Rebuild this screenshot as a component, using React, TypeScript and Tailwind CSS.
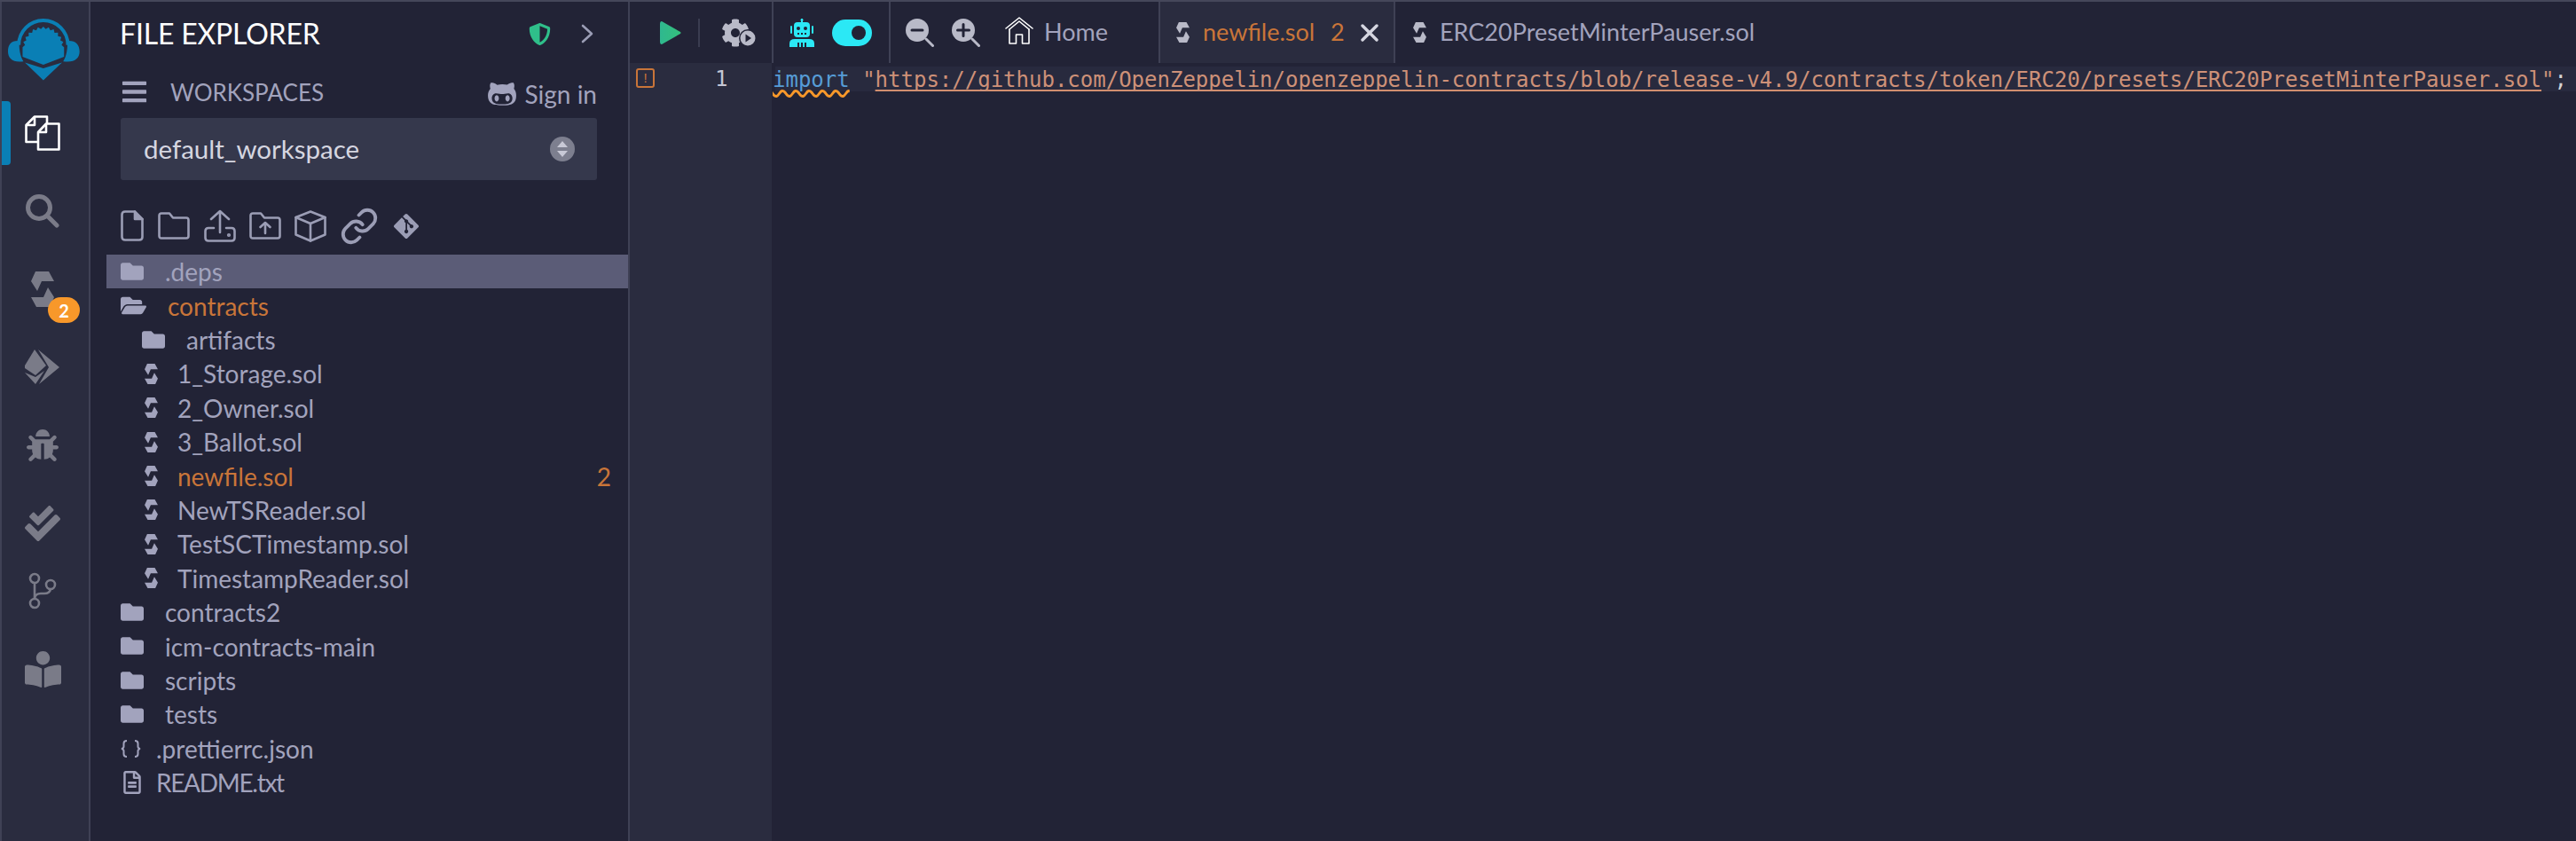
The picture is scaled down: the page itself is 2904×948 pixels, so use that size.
import React from "react";
import { Link as LinkIcon } from "lucide-react";
import { FaBars, FaBookReader, FaBug, FaCheckDouble, FaCog, FaFolder, FaFolderOpen, FaGitAlt, FaGithubAlt, FaRegFileAlt, FaShieldAlt } from "react-icons/fa";

const sunPoints = (() => {
  const pts: string[] = ["77,192"];
  for (let i = 0; i <= 24; i++) {
    const a = Math.PI * (1.0 + i / 24);
    const r = i % 2 === 0 ? 71 : 63;
    pts.push(`${(148 + r * Math.cos(a)).toFixed(1)},${(160 + r * Math.sin(a)).toFixed(1)}`);
  }
  pts.push("219,192", "148,220");
  return pts.join(" ");
})();

function Logo() {
  return (
    <svg width="81" height="70" viewBox="27 62 246 212">
      <path d="M64 152 A84 84 0 0 1 232 152" fill="none" stroke="#0a7fb5" strokeWidth="12" />
      <path d="M66 138 C38 136 27 150 27 175 C27 198 45 214 80 208 C68 192 64 160 66 138 Z" fill="#0a7fb5" />
      <path d="M230 138 C258 136 272 150 272 175 C272 198 254 214 216 208 C228 192 232 160 230 138 Z" fill="#0a7fb5" />
      <polygon points={sunPoints} fill="#0a7fb5" />
      <polygon points="85,212 148,232 212,212 148,273" fill="#0a7fb5" />
    </svg>
  );
}

function Sol({ w = 15, h = 23, color = "#a2a3bd" }: { w?: number; h?: number; color?: string }) {
  return (
    <svg width={w} height={h} viewBox="0 0 26 40" className="shrink-0">
      <polygon points="5,0 20,0 26,11 12,11 7,22 0,11" fill={color} />
      <polygon points="21,40 6,40 0,29 14,29 19,18 26,29" fill={color} />
    </svg>
  );
}

function FilesIcon() {
  return (
    <svg width="40" height="40" viewBox="0 0 40 40" fill="none" stroke="#ffffff" strokeWidth="2.6" strokeLinejoin="round">
      <path d="M15 30 H1.5 V11 L11 1.5 H25 V9" />
      <path d="M11 1.5 V11 H1.5" />
      <path d="M15 19 L24 9.5 H38.5 V38.5 H15 Z" />
      <path d="M24 9.5 V19 H15" />
    </svg>
  );
}

function SearchIcon() {
  return (
    <svg width="38" height="38" viewBox="0 0 38 38" fill="none" stroke="#7a7b88" strokeWidth="5" strokeLinecap="round">
      <circle cx="15" cy="15" r="12.5" />
      <path d="M24.5 24.5 L35 35" />
    </svg>
  );
}

function EthIcon() {
  return (
    <svg width="40" height="40" viewBox="0 0 40 40" fill="#7a7b88">
      <polygon points="0,18 11,0 24,18 12,29 0,21" />
      <polygon points="0,26 12,39 22,24 12,31" />
      <polygon points="15,0 39,20 16,39 27,20" />
    </svg>
  );
}

function GitIcon() {
  return (
    <svg width="32" height="42" viewBox="0 0 32 42" fill="none" stroke="#7a7b88" strokeWidth="2.6">
      <circle cx="7" cy="7" r="5" />
      <circle cx="25" cy="14" r="5" />
      <circle cx="7" cy="35" r="5" />
      <path d="M7 12 V30" />
      <path d="M25 19 Q24 24 18 24 H14 Q8 24 7 29" />
    </svg>
  );
}

function Nav({ children, extra = "" }: { children: React.ReactNode; extra?: string }) {
  return <div className={`relative h-[88px] flex items-center justify-center ${extra}`}>{children}</div>;
}

function IconPanel() {
  return (
    <div className="relative w-[102px] shrink-0 bg-[#2a2c3f] border-l-2 border-r-2 border-[#3f4155] flex flex-col pr-[6px]">
      <div className="h-[104px] pt-[19px] pl-[7px]">
        <Logo />
      </div>
      <Nav>
        <div className="absolute left-0 top-[8px] h-[72px] w-[10px] rounded-r-[4px] bg-[#0a7fb5]" />
        <FilesIcon />
      </Nav>
      <Nav>
        <SearchIcon />
      </Nav>
      <Nav>
        <Sol w={26} h={40} color="#7a7b88" />
        <span className="absolute left-[52px] top-[53px] h-[29px] w-[36px] rounded-full bg-[#f8982a] text-white text-[20px] font-bold flex items-center justify-center">2</span>
      </Nav>
      <Nav>
        <EthIcon />
      </Nav>
      <Nav>
        <FaBug size={36} color="#7a7b88" />
      </Nav>
      <Nav>
        <FaCheckDouble size={40} color="#7a7b88" />
      </Nav>
      <Nav extra="-mt-[12px]">
        <GitIcon />
      </Nav>
      <Nav>
        <FaBookReader size={41} color="#7a7b88" />
      </Nav>
    </div>
  );
}

function ToolIcons() {
  const s = { fill: "none", stroke: "#9b9db5", strokeWidth: 2.6, strokeLinejoin: "round" as const, strokeLinecap: "round" as const };
  return (
    <div className="h-[37px] mt-[33px] ml-[34px] flex items-center">
      <svg width="26" height="35" viewBox="0 0 26 35" {...s}>
        <path d="M5 1.5 H16 L24.5 10 V30 Q24.5 33.5 21 33.5 H5 Q1.5 33.5 1.5 30 V5 Q1.5 1.5 5 1.5 Z" />
        <path d="M16 1.5 V10 H24.5" fill="#9b9db5" />
      </svg>
      <svg className="ml-[16px]" width="36" height="31" viewBox="0 0 36 31" {...s}>
        <path d="M4 1.5 H13 L17 6.5 H32 Q34.5 6.5 34.5 9 V27 Q34.5 29.5 32 29.5 H4 Q1.5 29.5 1.5 27 V4 Q1.5 1.5 4 1.5 Z" />
      </svg>
      <svg className="ml-[16px]" width="36" height="37" viewBox="0 0 36 37" {...s}>
        <path d="M18 26 V2 M8 11 L18 2 L28 11" />
        <path d="M11 21 H5 Q1.5 21 1.5 24.5 V32 Q1.5 35.5 5 35.5 H31 Q34.5 35.5 34.5 32 V24.5 Q34.5 21 31 21 H25" />
        <circle cx="28" cy="29" r="0.8" fill="#9b9db5" />
      </svg>
      <svg className="ml-[15px]" width="36" height="31" viewBox="0 0 36 31" {...s}>
        <path d="M4 1.5 H13 L17 6.5 H32 Q34.5 6.5 34.5 9 V27 Q34.5 29.5 32 29.5 H4 Q1.5 29.5 1.5 27 V4 Q1.5 1.5 4 1.5 Z" />
        <path d="M18 24 V12 M12.5 17 L18 12 L23.5 17" />
      </svg>
      <svg className="ml-[15px]" width="36" height="36" viewBox="0 0 36 36" {...s}>
        <path d="M18 1.5 L34.5 8 V27.5 L18 34.5 L1.5 27.5 V8 Z" />
        <path d="M1.5 8 L18 15 L34.5 8 M18 15 V34.5" />
      </svg>
      <LinkIcon className="ml-[15px]" size={44} color="#9b9db5" strokeWidth={2.1} />
      <FaGitAlt className="ml-[15px]" size={32} color="#9b9db5" />
    </div>
  );
}

type Row = { n: string; k: "folder" | "open" | "sub" | "sol" | "json" | "txt"; hi?: boolean; orange?: boolean; count?: string; tight?: boolean };
const rows: Row[] = [
  { n: ".deps", k: "folder", hi: true },
  { n: "contracts", k: "open", orange: true },
  { n: "artifacts", k: "sub" },
  { n: "1_Storage.sol", k: "sol" },
  { n: "2_Owner.sol", k: "sol" },
  { n: "3_Ballot.sol", k: "sol" },
  { n: "newfile.sol", k: "sol", orange: true, count: "2" },
  { n: "NewTSReader.sol", k: "sol" },
  { n: "TestSCTimestamp.sol", k: "sol" },
  { n: "TimestampReader.sol", k: "sol" },
  { n: "contracts2", k: "folder" },
  { n: "icm-contracts-main", k: "folder" },
  { n: "scripts", k: "folder" },
  { n: "tests", k: "folder" },
  { n: ".prettierrc.json", k: "json" },
  { n: "README.txt", k: "txt", tight: true },
];

function RowIcon({ k }: { k: Row["k"] }) {
  if (k === "folder") return <div className="pl-[16px] w-[66px] shrink-0"><FaFolder size={26} color="#a2a3bd" /></div>;
  if (k === "open") return <div className="pl-[16px] w-[69px] shrink-0"><FaFolderOpen size={29} color="#a2a3bd" /></div>;
  if (k === "sub") return <div className="pl-[40px] w-[90px] shrink-0"><FaFolder size={26} color="#a2a3bd" /></div>;
  if (k === "sol") return <div className="pl-[43px] w-[80px] shrink-0"><Sol /></div>;
  if (k === "json")
    return (
      <div className="pl-[16px] w-[56px] shrink-0">
        <svg width="23" height="20" viewBox="0 0 23 20" fill="none" stroke="#a2a3bd" strokeWidth="2">
          <path d="M7 1 Q3.5 1 3.5 4 V7.5 Q3.5 9.5 1 10 Q3.5 10.5 3.5 12.5 V16 Q3.5 19 7 19" />
          <path d="M16 1 Q19.5 1 19.5 4 V7.5 Q19.5 9.5 22 10 Q19.5 10.5 19.5 12.5 V16 Q19.5 19 16 19" />
        </svg>
      </div>
    );
  return <div className="pl-[16px] w-[56px] shrink-0"><FaRegFileAlt size={26} color="#a2a3bd" /></div>;
}

function SidePanel() {
  return (
    <div className="w-[608px] shrink-0 bg-[#222336] border-r-2 border-[#3f4155] flex flex-col text-[#a2a3bd]">
      <div className="h-[72px] pl-[33px] pr-[39px] flex items-center justify-between">
        <span className="text-white text-[32px] tracking-[-0.2px]">FILE EXPLORER</span>
        <div className="flex items-center">
          <FaShieldAlt size={25} color="#2fbf8a" />
          <svg className="ml-[34px]" width="14" height="22" viewBox="0 0 14 22" fill="none" stroke="#9b9db5" strokeWidth="2.6" strokeLinecap="round" strokeLinejoin="round">
            <path d="M2 2 L12 11 L2 20" />
          </svg>
        </div>
      </div>
      <div className="h-[59px] pl-[34px] pr-[35px] flex items-center">
        <FaBars size={31} color="#a2a3bd" />
        <span className="ml-[25px] text-[26px] mt-[2px]">WORKSPACES</span>
        <div className="ml-auto flex items-center mt-[4px]">
          <FaGithubAlt size={34} color="#a2a3bd" />
          <span className="ml-[9px] text-[28px]">Sign in</span>
        </div>
      </div>
      <div className="h-[70px] ml-[34px] mr-[35px] rounded-[3px] bg-[#35384c] flex items-center pl-[26px] pr-[25px] text-[#d5d6e0] text-[29.5px]">
        <span>default_workspace</span>
        <svg className="ml-auto" width="28" height="28" viewBox="0 0 28 28">
          <circle cx="14" cy="14" r="14" fill="#7d7f8f" />
          <path d="M14 5 L20 12 H8 Z M14 23 L20 16 H8 Z" fill="#c8c9d6" />
        </svg>
      </div>
      <ToolIcons />
      <div className="mt-[14px] ml-[18px] flex flex-col">
        {rows.map((r) => (
          <div
            key={r.n}
            className={`h-[38.4px] flex items-center text-[28px] ${r.hi ? "bg-[#5b5c77]" : ""} ${r.orange ? "text-[#c97539]" : ""}`}
          >
            <RowIcon k={r.k} />
            <span className={r.tight ? "tracking-[-1.3px]" : ""}>{r.n}</span>
            {r.count ? <span className="ml-auto mr-[19px]">{r.count}</span> : null}
          </div>
        ))}
      </div>
    </div>
  );
}

function Zoom({ plus, className = "" }: { plus?: boolean; className?: string }) {
  return (
    <svg className={className} width="32" height="32" viewBox="0 0 32 32">
      <circle cx="13" cy="13" r="13" fill="#b9bac8" />
      <path d="M23 23 L30.5 30.5" stroke="#b9bac8" strokeWidth="3" strokeLinecap="round" />
      <path d={plus ? "M6.5 13 H19.5 M13 6.5 V19.5" : "M7 13 H19"} stroke="#222336" strokeWidth="3" strokeLinecap="round" />
    </svg>
  );
}

function Robot() {
  return (
    <svg width="28" height="32" viewBox="0 0 28 32" fill="#2be8f5">
      <rect x="13" y="0" width="2" height="5" />
      <circle cx="14" cy="1.5" r="1.5" />
      <rect x="5" y="4" width="18" height="17" rx="4" />
      <rect x="1" y="8" width="2" height="9" rx="1" />
      <rect x="25" y="8" width="2" height="9" rx="1" />
      <circle cx="10" cy="11" r="2" fill="#222336" />
      <circle cx="18" cy="11" r="2" fill="#222336" />
      <rect x="9" y="16" width="2" height="2" fill="#222336" />
      <rect x="13" y="16" width="2" height="2" fill="#222336" />
      <rect x="17" y="16" width="2" height="2" fill="#222336" />
      <path d="M0 32 V28 Q0 23 6 23 H22 Q28 23 28 28 V32 Z" />
      <rect x="9" y="27" width="2" height="5" fill="#222336" />
      <rect x="13" y="27" width="2" height="5" fill="#222336" />
      <rect x="17" y="27" width="2" height="5" fill="#222336" />
    </svg>
  );
}

function TabBar() {
  return (
    <div className="h-[69px] flex items-stretch text-[#a2a3bd] text-[27px] shrink-0">
      <div className="w-[162px] border-r-2 border-[#3f4155] flex items-center pl-[34px]">
        <svg width="24" height="28" viewBox="0 0 24 28">
          <defs>
            <linearGradient id="pg" x1="0" y1="0" x2="1" y2="0">
              <stop offset="0" stopColor="#2fb88f" />
              <stop offset="1" stopColor="#35c07c" />
            </linearGradient>
          </defs>
          <path d="M2 1 Q0 1 0 4 V24 Q0 27 2 27 L23 15 Q24 14 23 13 Z" fill="url(#pg)" />
        </svg>
        <div className="ml-[19px] h-[32px] w-[2px] bg-[#3a3c50]" />
        <div className="ml-[24px] relative w-[40px] h-[32px]">
          <FaCog size={32} color="#b9bac8" />
          <svg className="absolute left-[20px] top-[12px]" width="20" height="20" viewBox="0 0 20 20">
            <circle cx="10" cy="10" r="10" fill="#222336" />
            <circle cx="10" cy="10" r="8.5" fill="#b9bac8" />
            <path d="M7.5 5.5 L14 10 L7.5 14.5 Z" fill="#222336" />
          </svg>
        </div>
      </div>
      <div className="w-[132px] border-r-2 border-[#3f4155] flex items-center pl-[18px]">
        <Robot />
        <div className="ml-[20px] h-[30px] w-[45px] rounded-full bg-[#2be8f5] flex items-center justify-end pr-[7px]">
          <div className="h-[16px] w-[16px] rounded-full bg-[#222336]" />
        </div>
      </div>
      <div className="w-[304px] border-r-2 border-[#3f4155] flex items-center pl-[17px]">
        <Zoom />
        <Zoom plus className="ml-[20px]" />
        <svg className="ml-[28px] -mt-[4px]" width="32" height="31" viewBox="0 0 32 31" fill="none" stroke="#ffffff" strokeWidth="1.6" strokeLinejoin="round" strokeLinecap="round">
          <path d="M1 13 L16 1 L31 13" />
          <path d="M5 14 L16 5 L27 14" />
          <path d="M5 14 V30 H12.5 V20 H19.5 V30 H27 V14" />
        </svg>
        <span className="ml-[12px]">Home</span>
      </div>
      <div className="w-[265px] border-r-2 border-[#3f4155] bg-[#2a2c3f] flex items-center pl-[18px]">
        <Sol color="#b9bac8" />
        <span className="ml-[15px] text-[#c97539] w-[128px]">newfile.sol</span>
        <span className="ml-[16px] text-[#c97539]">2</span>
        <svg className="ml-[18px]" width="20" height="20" viewBox="0 0 20 20" stroke="#d5d6e0" strokeWidth="3.4" strokeLinecap="round">
          <path d="M2 2 L18 18 M18 2 L2 18" />
        </svg>
      </div>
      <div className="flex items-center pl-[20px]">
        <Sol color="#b9bac8" />
        <span className="ml-[15px]">ERC20PresetMinterPauser.sol</span>
      </div>
    </div>
  );
}

function Editor() {
  return (
    <div className="flex-1 flex min-h-0 font-['DejaVu_Sans_Mono',monospace] text-[24px]">
      <div className="w-[160px] shrink-0 bg-[#2a2c3f] pt-[6px] pl-[7px] flex items-start">
        <div className="h-[22px] w-[21px] rounded-[3px] border-2 border-[#c97539] text-[#c97539] text-[15px] flex items-center justify-center font-['Liberation_Sans',sans-serif]">!</div>
        <span className="ml-[68px] text-[#c5c7d5] leading-[24px]">1</span>
      </div>
      <div className="flex-1 pt-[4px] min-w-0">
        <div className="h-[28px] ml-[4px] bg-[#282a3e] leading-[30px] whitespace-pre">
          <span className="-ml-[3px] text-[#569cd6] underline decoration-wavy decoration-[#f8982a] decoration-[2.5px] underline-offset-[3px] [text-decoration-skip-ink:none]">import</span>
          <span className="text-[#ce9178]"> "</span>
          <span className="text-[#ce9178] underline decoration-[#d18e6f] decoration-[2px] underline-offset-[3px] [text-decoration-skip-ink:none]">https://github.com/OpenZeppelin/openzeppelin-contracts/blob/release-v4.9/contracts/token/ERC20/presets/ERC20PresetMinterPauser.sol</span>
          <span className="text-[#ce9178]">"</span>
          <span className="text-[#d4d4d4]">;</span>
        </div>
      </div>
    </div>
  );
}

export default function App() {
  return (
    <div className="w-[2904px] h-[948px] overflow-hidden bg-[#222336] border-t-2 border-[#45475a] flex font-[Lato,sans-serif]">
      <IconPanel />
      <SidePanel />
      <div className="flex-1 min-w-0 flex flex-col">
        <TabBar />
        <Editor />
      </div>
    </div>
  );
}
